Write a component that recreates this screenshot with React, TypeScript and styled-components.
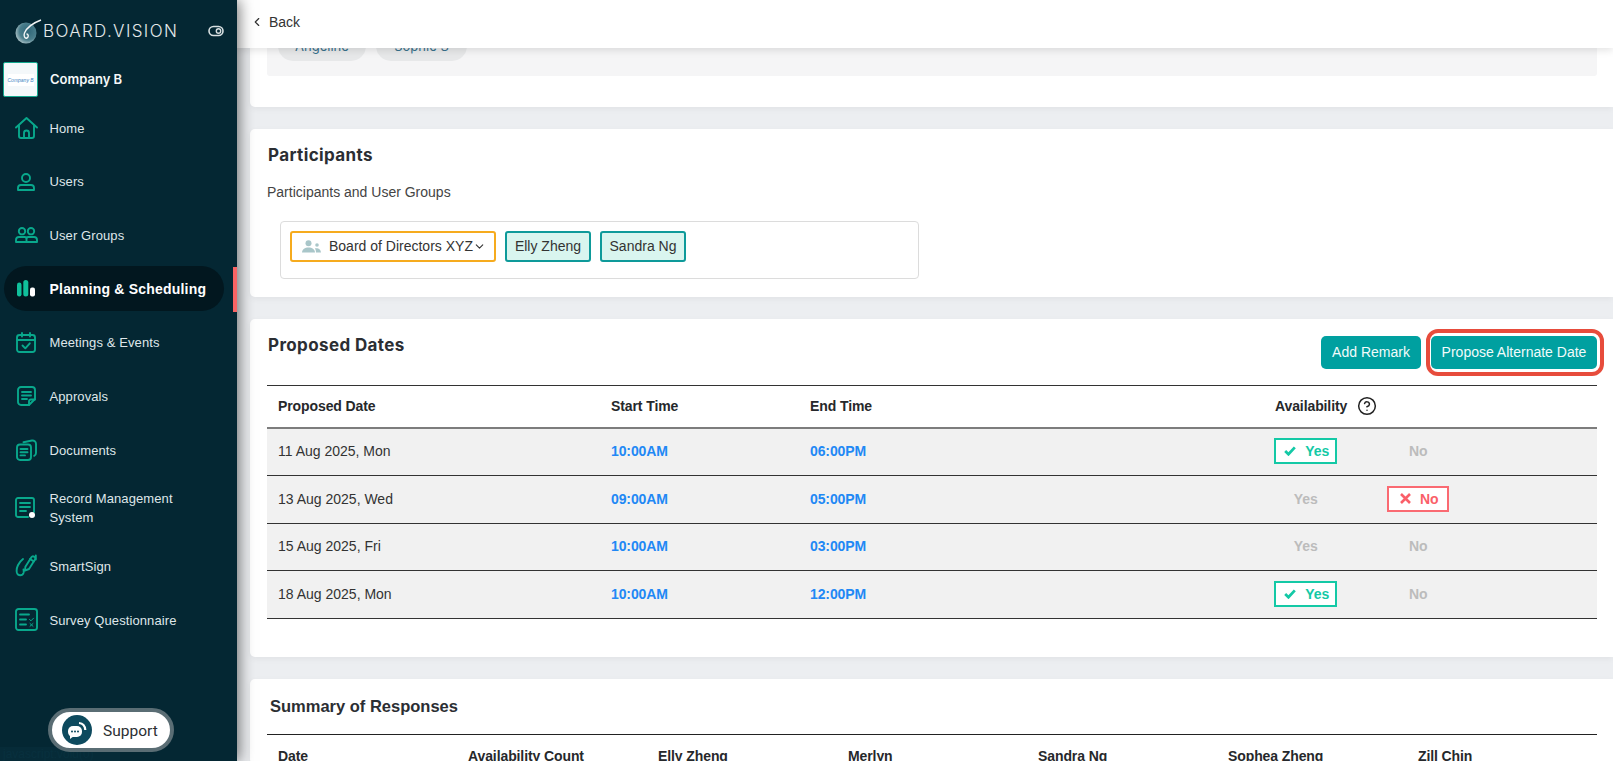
import React from "react";
import styled, { createGlobalStyle } from "styled-components";
import { ChevronLeft, ChevronDown, CircleHelp } from "lucide-react";

const Global = createGlobalStyle`
  html, body { margin: 0; padding: 0; height: 100%; overflow: hidden; background: #eceef1; }
  #root { height: 100%; }
  * { box-sizing: border-box; }
`;

const TEAL = "#09a88c";

const Page = styled.div`
  display: flex;
  width: 1613px;
  height: 761px;
  overflow: hidden;
  font-family: "Liberation Sans", Arial, sans-serif;
`;

const Sidebar = styled.aside`
  position: relative;
  z-index: 3;
  flex: 0 0 237px;
  height: 761px;
  display: flex;
  flex-direction: column;
  background: #042733;
  box-shadow: 2px 0 14px rgba(0, 0, 0, 0.55);
`;

const Brand = styled.div`
  height: 62px;
  display: flex;
  align-items: center;
  padding: 0 13px 0 14px;
`;

const BrandName = styled.span`
  margin-left: 1px;
  font-family: Inter, sans-serif;
  font-weight: 300;
  font-size: 17px;
  letter-spacing: 1.36px;
  color: #e4e9ea;
  white-space: nowrap;
`;

const EyeToggle = styled.svg`
  margin-left: auto;
  flex: none;
`;

const CompanyRow = styled.div`
  height: 39px;
  display: flex;
  align-items: flex-start;
  padding-left: 3px;
`;

const CompanyLogo = styled.div`
  width: 35px;
  height: 35px;
  background: #f4f8fa;
  border: 1px solid #13a98f;
  border-radius: 2px;
  display: flex;
  align-items: center;
  justify-content: center;
`;

const CompanyLogoText = styled.span`
  background: #fff;
  font-size: 5px;
  line-height: 12px;
  width: 26px;
  text-align: center;
  color: #3b85c4;
  font-style: italic;
  white-space: nowrap;
`;

const CompanyName = styled.span`
  margin-left: 12px;
  font-family: Inter, sans-serif;
  font-weight: 600;
  font-size: 13px;
  line-height: 35px;
  color: #f5f7f8;
`;

const NavList = styled.nav`
  display: flex;
  flex-direction: column;
`;

const NavItem = styled.a<{ $h: number; $active?: boolean }>`
  position: relative;
  height: ${(p) => p.$h}px;
  display: flex;
  align-items: center;
  text-decoration: none;
  &::after {
    content: "";
    display: ${(p) => (p.$active ? "block" : "none")};
    position: absolute;
    right: 0;
    top: 5px;
    width: 4px;
    height: 45px;
    background: #f96464;
  }
`;

const NavInner = styled.div<{ $active?: boolean }>`
  margin-left: 4px;
  width: 220px;
  height: 45px;
  display: flex;
  align-items: center;
  border-radius: 23px;
  background: ${(p) => (p.$active ? "#02171f" : "transparent")};
`;

const NavIcon = styled.span`
  flex: 0 0 45.5px;
  display: flex;
  justify-content: center;
  padding-right: 1.5px;
`;

const NavLabel = styled.span<{ $active?: boolean }>`
  font-size: ${(p) => (p.$active ? "14px" : "13px")};
  font-weight: ${(p) => (p.$active ? 700 : 400)};
  letter-spacing: ${(p) => (p.$active ? "0.2px" : "0.1px")};
  line-height: 18.5px;
  padding-top: ${(p) => (p.$active ? "0" : "2px")};
  color: ${(p) => (p.$active ? "#ffffff" : "#dfe6e9")};
  max-width: 165px;
`;

const SupportWrap = styled.div`
  position: relative;
  z-index: 1;
  margin-top: auto;
  margin-bottom: 9px;
  margin-left: 48px;
`;

const SupportButton = styled.div`
  width: 126px;
  height: 44px;
  border-radius: 22px;
  background: #fff;
  border: 4px solid #5a6d74;
  display: flex;
  align-items: center;
  padding-left: 10px;
  gap: 11px;
  font-family: Roboto, sans-serif;
  font-size: 15.5px;
  color: #2c2f33;
`;

const SupportLabel = styled.span`
  padding-top: 2px;
`;

const StatusBubble = styled.div`
  position: absolute;
  left: 0;
  bottom: 0;
  width: 120px;
  height: 14px;
  background: #062b38;
  color: #08303e;
  font-size: 12px;
  line-height: 14px;
  padding-left: 3px;
  overflow: hidden;
`;

const Main = styled.main`
  flex: 1;
  min-width: 0;
  display: flex;
  flex-direction: column;
  height: 761px;
`;

const TopBar = styled.header`
  position: relative;
  z-index: 2;
  flex: 0 0 48px;
  background: #fff;
  box-shadow: 0 2px 8px rgba(0, 0, 0, 0.12);
  display: flex;
  align-items: center;
  padding-left: 13px;
  padding-bottom: 4px;
  gap: 5px;
  font-size: 14px;
  color: #333;
`;

const Content = styled.div`
  flex: 1;
  min-height: 0;
  overflow: hidden;
  padding-left: 13px;
  display: flex;
  flex-direction: column;
  gap: 22px;
`;

const Card = styled.section<{ $h?: number }>`
  flex: none;
  ${(p) => (p.$h ? `height: ${p.$h}px;` : "")}
  background: #fff;
  border-radius: 5px 0 0 5px;
  padding: 0 16px 0 17px;
  box-shadow: 0 2px 6px rgba(0, 0, 0, 0.05);
`;

const ClippedCard = styled(Card)`
  overflow: hidden;
  border-radius: 0 0 0 5px;
`;

const NameBox = styled.div`
  height: 28px;
  background: #f5f5f6;
  border-radius: 0 0 3px 3px;
  display: flex;
  align-items: flex-end;
  gap: 10px;
  padding: 0 0 15px 11px;
`;

const NamePill = styled.span<{ $w: number }>`
  flex: none;
  width: ${(p) => p.$w}px;
  height: 30px;
  line-height: 30px;
  border-radius: 15px;
  background: #e7e8e9;
  color: #38718c;
  text-align: center;
  font-family: Inter, sans-serif;
  font-size: 13px;
`;

const SectionTitle = styled.h2`
  margin: 0 0 0 1px;
  font-family: Inter, sans-serif;
  font-weight: 700;
  font-size: 17px;
  letter-spacing: 0.38px;
  line-height: 22px;
  color: #2b2e33;
`;

const ParticipantsHead = styled.div`
  padding-top: 15px;
`;

const FieldLabel = styled.div`
  margin-top: 15px;
  font-size: 14px;
  line-height: 22px;
  color: #444;
`;

const ParticipantBox = styled.div`
  margin: 18px 0 0 13px;
  width: 639px;
  height: 58px;
  border: 1px solid #dcdcdc;
  border-radius: 4px;
  padding: 9px 9px;
  display: flex;
  gap: 9px;
  align-items: flex-start;
`;

const GroupSelect = styled.div`
  width: 206px;
  height: 31px;
  border: 2px solid #f6ab1e;
  border-radius: 3px;
  display: flex;
  align-items: center;
  padding: 0 0 1px 10px;
  font-size: 14px;
  color: #333;
  white-space: nowrap;
`;

const GroupText = styled.span`
  margin-left: 8px;
`;

const ParticipantChip = styled.div<{ $w: number }>`
  width: ${(p) => p.$w}px;
  height: 31px;
  background: #d9f5ef;
  border: 2px solid #0e9a9a;
  border-radius: 3px;
  display: flex;
  align-items: center;
  justify-content: center;
  padding-bottom: 1px;
  font-size: 14px;
  color: #333;
`;

const ProposedHead = styled.div`
  display: flex;
  justify-content: space-between;
  align-items: flex-start;
  height: 66px;
  padding-top: 15px;
`;

const Actions = styled.div`
  display: flex;
  gap: 10px;
  margin-top: 2px;
`;

const ActionButton = styled.button<{ $w: number }>`
  position: relative;
  width: ${(p) => p.$w}px;
  height: 33px;
  border: none;
  border-radius: 5px;
  background: #00a0a0;
  color: #f1fbfb;
  font-family: "Liberation Sans", Arial, sans-serif;
  font-size: 14px;
  padding: 0 0 2px;
`;

const Highlight = styled.span`
  position: absolute;
  inset: -7px -7px -7px -5px;
  border: 4px solid #e74c3c;
  border-radius: 12px;
  pointer-events: none;
`;

const Grid = styled.div`
  border-top: 1px solid #333;
`;

const Row = styled.div<{ $head?: boolean }>`
  display: grid;
  grid-template-columns: 333px 199px 465px 1fr;
  align-items: center;
  height: ${(p) => (p.$head ? "42.5px" : "47.6px")};
  padding: ${(p) => (p.$head ? "0 0 0 11px" : "0 0 1px 11px")};
  background: ${(p) => (p.$head ? "#fff" : "#f1f1f1")};
  border-bottom: ${(p) => (p.$head ? "2px solid #7d7d7d" : "1px solid #333")};
  font-size: 14px;
  color: #333;
`;

const HeadCell = styled.div`
  font-weight: 700;
  letter-spacing: -0.1px;
  color: #26282b;
  display: flex;
  align-items: center;
  gap: 10px;
`;

const TimeCell = styled.div`
  font-weight: 700;
  letter-spacing: -0.1px;
  color: #2188f5;
`;

const AvailCell = styled.div`
  display: flex;
  gap: 50px;
  margin-left: -1px;
`;

const Choice = styled.div<{ $state: "yes" | "no" | "off" }>`
  width: 62.5px;
  height: 26px;
  display: flex;
  align-items: center;
  justify-content: center;
  gap: 9px;
  padding-left: ${(p) => (p.$state === "off" ? "1px" : "3px")};
  font-weight: 700;
  background: ${(p) => (p.$state === "off" ? "transparent" : "#fff")};
  border: 2px solid
    ${(p) => (p.$state === "yes" ? "#14c9a6" : p.$state === "no" ? "#fa6a72" : "transparent")};
  color: ${(p) => (p.$state === "yes" ? "#14c9a6" : p.$state === "no" ? "#fa5f69" : "#bcbcbc")};
`;

const SummaryTitle = styled.h2`
  margin: 0;
  padding: 16px 0 0 3px;
  font-size: 16.5px;
  font-weight: 700;
  line-height: 22px;
  color: #2b2e33;
  height: 55px;
`;

const SummaryHead = styled.div`
  display: grid;
  grid-template-columns: 190px repeat(5, 190px) 1fr;
  padding: 13px 0 0 11px;
  border-top: 1px solid #222;
  font-size: 14px;
  font-weight: 700;
  letter-spacing: -0.1px;
  color: #26282b;
`;

const stroke = { fill: "none", stroke: TEAL, strokeWidth: 1.9, strokeLinecap: "round" as const, strokeLinejoin: "round" as const };

const icons: Record<string, React.ReactNode> = {
  home: (
    <svg width="23" height="22" viewBox="0 0 23 22" {...stroke}>
      <path d="M1 10.5 11.5 1 22 10.5" />
      <path d="M4 8.5V19a2 2 0 0 0 2 2h11a2 2 0 0 0 2-2V8.5" />
      <path d="M9 21v-5a2.5 2.5 0 0 1 5 0v5" />
    </svg>
  ),
  user: (
    <svg width="20" height="18" viewBox="0 0 20 18" {...stroke}>
      <circle cx="10" cy="5" r="4" />
      <path d="M2 17v-2a3 3 0 0 1 3-3h10a3 3 0 0 1 3 3v2z" />
    </svg>
  ),
  group: (
    <svg width="23" height="16" viewBox="0 0 23 16" {...stroke}>
      <circle cx="7" cy="4.2" r="3.2" />
      <circle cx="16" cy="4.2" r="3.2" />
      <path d="M1 15v-2a3 3 0 0 1 3-3h6a2 2 0 0 1 1.5 1A2 2 0 0 1 13 10h6a3 3 0 0 1 3 3v2z" />
      <path d="M11.5 11v4" />
    </svg>
  ),
  plan: (
    <svg width="18" height="17" viewBox="0 0 18 17">
      <rect x="0" y="2.5" width="4.5" height="14" rx="2.25" fill="#10c09b" />
      <rect x="6.3" y="0" width="5" height="16.5" rx="2.5" fill="#10c09b" />
      <rect x="13" y="7.5" width="5" height="9" rx="2" fill="#fff" />
    </svg>
  ),
  meet: (
    <svg width="20" height="21" viewBox="0 0 20 21" {...stroke}>
      <rect x="1" y="3" width="18" height="17" rx="2.5" />
      <path d="M1 8h18M6 1v3.5M14 1v3.5" />
      <path d="m6.5 13.5 2.8 2.8 4.5-5" />
    </svg>
  ),
  approve: (
    <svg width="19" height="20" viewBox="0 0 19 20" {...stroke}>
      <path d="M12 19H4a3 3 0 0 1-3-3V4a3 3 0 0 1 3-3h11a3 3 0 0 1 3 3v9z" />
      <path d="M12 19v-3.5a2 2 0 0 1 2-2h4" />
      <path d="M5 6h9M5 9.5h9M5 13h5" />
    </svg>
  ),
  docs: (
    <svg width="21" height="22" viewBox="0 0 21 22" {...stroke}>
      <rect x="1" y="5.5" width="14" height="15.5" rx="3" />
      <path d="M4.5 10h7M4.5 13.2h7M4.5 16.4h4.5" />
      <path d="M7.5 3.2 16 1.5a3.4 3.4 0 0 1 4 3.4V14a3 3 0 0 1-1.8 2.8" />
    </svg>
  ),
  record: (
    <svg width="22" height="22" viewBox="0 0 22 22" {...stroke}>
      <path d="M13 20H3a2 2 0 0 1-2-2V3a2 2 0 0 1 2-2h14a2 2 0 0 1 2 2v12" />
      <path d="M5 6h10M5 10h10M5 14h6" />
      <circle cx="17" cy="18" r="3" fill="#fff" stroke="none" />
    </svg>
  ),
  sign: (
    <svg width="23" height="23" viewBox="0 0 23 23" {...stroke}>
      <path d="m14 15 6-9.5a1.8 1.8 0 0 0-.5-2.5l-.6-.4a1.8 1.8 0 0 0-2.5.6l-6 9.6-.5 3.9z" />
      <path d="m15 5 3.8 2.4M20.8 1.5v4" />
      <path d="M8 5C4 8 .5 14 2 19c1 3 5.500 3 6.500 0 .4-1.300.2-2.500 0-3.500" />
    </svg>
  ),
  survey: (
    <svg width="23" height="23" viewBox="0 0 23 23" {...stroke}>
      <rect x="1" y="1" width="21" height="21" rx="2.5" />
      <path d="M5 6.500h9M5 11.500h6M5 16.500h6" />
      <path d="m14.500 11.500 1.500 1.300 2.500-2.600M15 15.500l3 2.800M18 15.500l-3 2.800" strokeWidth="1" />
    </svg>
  ),
};

const nav = [
  { id: "home", label: "Home", h: 53.7 },
  { id: "user", label: "Users", h: 53.7 },
  { id: "group", label: "User Groups", h: 53.7 },
  { id: "plan", label: "Planning & Scheduling", h: 53.7, active: true },
  { id: "meet", label: "Meetings & Events", h: 53.7 },
  { id: "approve", label: "Approvals", h: 53.7 },
  { id: "docs", label: "Documents", h: 53.7 },
  { id: "record", label: "Record Management System", h: 62 },
  { id: "sign", label: "SmartSign", h: 54 },
  { id: "survey", label: "Survey Questionnaire", h: 54 },
];

type Avail = "yes" | "no" | "none";
const rows: { date: string; start: string; end: string; a: Avail }[] = [
  { date: "11 Aug 2025, Mon", start: "10:00AM", end: "06:00PM", a: "yes" },
  { date: "13 Aug 2025, Wed", start: "09:00AM", end: "05:00PM", a: "no" },
  { date: "15 Aug 2025, Fri", start: "10:00AM", end: "03:00PM", a: "none" },
  { date: "18 Aug 2025, Mon", start: "10:00AM", end: "12:00PM", a: "yes" },
];

const Check = () => (
  <svg width="12" height="10" viewBox="0 0 13 11" fill="none" stroke="#14c9a6" strokeWidth="3">
    <path d="m1.200 5.500 3.600 3.600 7-7.600" />
  </svg>
);
const Cross = () => (
  <svg width="11" height="11" viewBox="0 0 11 11" fill="none" stroke="#fa5f69" strokeWidth="2.6">
    <path d="m1 1 9 9M10 1l-9 9" />
  </svg>
);

const Logo = () => (
  <svg width="28" height="26" viewBox="0 0 28 26">
    <defs>
      <radialGradient id="orb" cx="60%" cy="42%" r="68%">
        <stop offset="0%" stopColor="#2f6678" />
        <stop offset="60%" stopColor="#4a7e8c" />
        <stop offset="100%" stopColor="#c0d0d2" />
      </radialGradient>
    </defs>
    <circle cx="12" cy="15" r="10.500" fill="url(#orb)" />
    <path d="M27 2C19 5 13 9 10.500 15c-1.200 3 .5 6 2.500 5s1.500-4-.5-4" fill="none" stroke="#f3f6f6" strokeWidth="1.400" />
  </svg>
);

export default function App() {
  return (
    <>
      <Global />
      <Page>
        <Sidebar>
          <Brand>
            <Logo />
            <BrandName>BOARD.VISION</BrandName>
            <EyeToggle width="16" height="12" viewBox="0 0 16 12">
              <rect x="1" y="1.500" width="14" height="9" rx="4.500" fill="none" stroke="#d7dfe1" strokeWidth="1.600" />
              <circle cx="10.500" cy="6" r="2.200" fill="none" stroke="#d7dfe1" strokeWidth="1.400" />
            </EyeToggle>
          </Brand>
          <CompanyRow>
            <CompanyLogo>
              <CompanyLogoText>Company B</CompanyLogoText>
            </CompanyLogo>
            <CompanyName>Company B</CompanyName>
          </CompanyRow>
          <NavList>
            {nav.map((n) => (
              <NavItem key={n.id} $h={n.h} $active={n.active}>
                <NavInner $active={n.active}>
                  <NavIcon>{icons[n.id]}</NavIcon>
                  <NavLabel $active={n.active}>{n.label}</NavLabel>
                </NavInner>
              </NavItem>
            ))}
          </NavList>
          <SupportWrap>
            <SupportButton>
              <svg width="30" height="30" viewBox="0 0 30 30">
                <circle cx="15" cy="15" r="15" fill="#0d4a5e" />
                <rect x="6" y="11" width="14" height="11" rx="5" fill="#fff" />
                <path d="M8 20v4l4-3z" fill="#fff" />
                <circle cx="10" cy="16.500" r="1" fill="#0d4a5e" />
                <circle cx="13" cy="16.500" r="1" fill="#0d4a5e" />
                <circle cx="16" cy="16.500" r="1" fill="#0d4a5e" />
                <path d="M17 8c3.500.2 6 2.800 6.300 7" fill="none" stroke="#fff" strokeWidth="2.200" />
              </svg>
              <SupportLabel>Support</SupportLabel>
            </SupportButton>
          </SupportWrap>
          <StatusBubble>javascript:void(0)</StatusBubble>
        </Sidebar>
        <Main>
          <TopBar>
            <ChevronLeft size={14} strokeWidth={2} color="#333" />
            Back
          </TopBar>
          <Content>
            <ClippedCard $h={59}>
              <NameBox>
                <NamePill $w={88}>Angeline</NamePill>
                <NamePill $w={91}>Sophie S</NamePill>
              </NameBox>
            </ClippedCard>
            <Card $h={168}>
              <ParticipantsHead>
                <SectionTitle>Participants</SectionTitle>
              </ParticipantsHead>
              <FieldLabel>Participants and User Groups</FieldLabel>
              <ParticipantBox>
                <GroupSelect>
                  <svg width="19" height="13" viewBox="0 0 19 13" fill="#a9c6c9">
                    <circle cx="6.500" cy="3.200" r="3" />
                    <path d="M0 12.500c.3-3.500 2.800-5 6.500-5s6.200 1.500 6.500 5z" />
                    <circle cx="15" cy="5" r="1.800" />
                    <path d="M14 12.500c0-1.500-.3-3-1.200-4 1.800-.8 5.800-.5 6.200 4z" />
                  </svg>
                  <GroupText>Board of Directors XYZ</GroupText>
                  <ChevronDown size={13} strokeWidth={2} color="#333" />
                </GroupSelect>
                <ParticipantChip $w={86}>Elly Zheng</ParticipantChip>
                <ParticipantChip $w={86}>Sandra Ng</ParticipantChip>
              </ParticipantBox>
            </Card>
            <Card $h={338}>
              <ProposedHead>
                <SectionTitle>Proposed Dates</SectionTitle>
                <Actions>
                  <ActionButton $w={100}>Add Remark</ActionButton>
                  <ActionButton $w={166}>
                    Propose Alternate Date
                    <Highlight />
                  </ActionButton>
                </Actions>
              </ProposedHead>
              <Grid>
                <Row $head>
                  <HeadCell>Proposed Date</HeadCell>
                  <HeadCell>Start Time</HeadCell>
                  <HeadCell>End Time</HeadCell>
                  <HeadCell>
                    Availability
                    <CircleHelp size={20} strokeWidth={1.800} color="#222" />
                  </HeadCell>
                </Row>
                {rows.map((r) => (
                  <Row key={r.date}>
                    <div>{r.date}</div>
                    <TimeCell>{r.start}</TimeCell>
                    <TimeCell>{r.end}</TimeCell>
                    <AvailCell>
                      <Choice $state={r.a === "yes" ? "yes" : "off"}>
                        {r.a === "yes" && <Check />}
                        Yes
                      </Choice>
                      <Choice $state={r.a === "no" ? "no" : "off"}>
                        {r.a === "no" && <Cross />}
                        No
                      </Choice>
                    </AvailCell>
                  </Row>
                ))}
              </Grid>
            </Card>
            <Card>
              <SummaryTitle>Summary of Responses</SummaryTitle>
              <SummaryHead>
                <div>Date</div>
                <div>Availability Count</div>
                <div>Elly Zheng</div>
                <div>Merlyn</div>
                <div>Sandra Ng</div>
                <div>Sophea Zheng</div>
                <div>Zill Chin</div>
              </SummaryHead>
            </Card>
          </Content>
        </Main>
      </Page>
    </>
  );
}
